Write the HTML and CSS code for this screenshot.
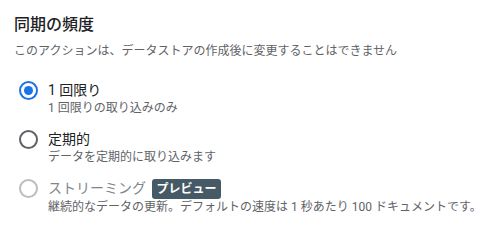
FILE: index.html
```html
<!DOCTYPE html>
<html lang="ja">
<head>
    <meta charset="UTF-8">
    <title>同期の頻度</title>
    <link rel="stylesheet" href="styles.css">
</head>
<body>
    <div class="panel">
        <h2 class="title">同期の頻度</h2>
        <p class="desc">このアクションは、データストアの作成後に変更することはできません</p>

        <div class="options">
            <label class="option">
                <span class="radio checked"></span>
                <span class="text">
                    <span class="label">1 回限り</span>
                    <span class="hint">1 回限りの取り込みのみ</span>
                </span>
            </label>
            <label class="option">
                <span class="radio"></span>
                <span class="text">
                    <span class="label">定期的</span>
                    <span class="hint">データを定期的に取り込みます</span>
                </span>
            </label>
            <label class="option disabled">
                <span class="radio"></span>
                <span class="text">
                    <span class="label">ストリーミング <span class="chip">プレビュー</span></span>
                    <span class="hint">継続的なデータの更新。デフォルトの速度は 1 秒あたり 100 ドキュメントです。</span>
                </span>
            </label>
        </div>
    </div>
</body>
</html>
```

FILE: styles.css
```css
body {
    margin: 0;
    background: #fff;
    font-family: Roboto, "Noto Sans CJK JP", sans-serif;
    color: #202124;
}
.panel {
    padding: 15px 8px 0 14px;
}
.title {
    margin: 0;
    font-size: 16px;
    font-weight: 500;
    line-height: 20px;
}
.desc {
    margin: 8px 0 0;
    font-size: 12px;
    line-height: 16px;
    color: #5f6368;
}
.options {
    display: flex;
    flex-direction: column;
    gap: 13px;
    margin-top: 21px;
}
.option {
    display: flex;
    align-items: flex-start;
    gap: 10px;
    padding-left: 5px;
}
.radio {
    box-sizing: border-box;
    width: 19px;
    height: 19px;
    margin-top: 1px;
    border: 2px solid #5f6368;
    border-radius: 50%;
    flex: none;
    position: relative;
}
.radio.checked {
    border-color: #1a73e8;
}
.radio.checked::after {
    content: "";
    position: absolute;
    top: 3px;
    left: 3px;
    width: 9px;
    height: 9px;
    border-radius: 50%;
    background: #1a73e8;
}
.disabled .radio {
    border-color: #bdbdbd;
}
.text {
    display: flex;
    flex-direction: column;
}
.label {
    font-size: 14px;
    line-height: 20px;
}
.disabled .label {
    color: #80868b;
}
.hint {
    font-size: 12px;
    line-height: 16px;
    color: #5f6368;
    white-space: nowrap;
}
.chip {
    display: inline-block;
    margin-left: 3px;
    padding: 0 4px;
    background: #455a64;
    color: #fff;
    font-size: 12px;
    font-weight: 700;
    line-height: 20px;
    border-radius: 3px;
    vertical-align: middle;
}
```
